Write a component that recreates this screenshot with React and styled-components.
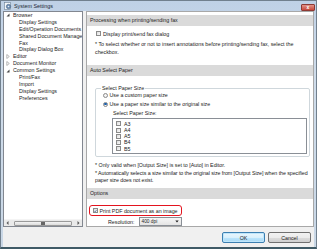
import React from 'react';
import styled, { createGlobalStyle } from 'styled-components';

const GlobalStyle = createGlobalStyle`
  html, body { margin: 0; padding: 0; }
  body {
    font-family: "Liberation Sans", Arial, sans-serif;
    font-size: 5.3px;
    color: #222;
    background: #fff;
  }
  * { box-sizing: border-box; }
`;

const Window = styled.div`
  width: 317px;
  height: 249px;
  display: flex;
  flex-direction: column;
  background: linear-gradient(#bfd1e6, #cfdcea 30%, #c9d7e6);
  border: 1px solid #71808e;
  border-bottom: 2px solid #3f5a66;
  padding: 0 2px 0 2px;
`;

const TitleBar = styled.div`
  height: 10px;
  display: flex;
  align-items: center;
  padding-left: 1px;
  gap: 2px;
  font-size: 5.4px;
  color: #1b2633;
`;

const CloseButton = styled.div`
  margin-left: auto;
  margin-right: -1px;
  width: 14px;
  height: 7px;
  margin-top: 2px;
  border-radius: 1px;
  border: 1px solid #8e3a34;
  background: linear-gradient(#e2958a, #c8473a);
  color: #fff;
  font-size: 5px;
  line-height: 5px;
  text-align: center;
  font-weight: bold;
`;

const Client = styled.div`
  flex: 1;
  display: flex;
  flex-direction: column;
  background: #f0f0f0;
`;

const Main = styled.div`
  height: 216px;
  display: flex;
  gap: 3px;
`;

const TreePane = styled.div`
  width: 80px;
  border: 1px solid #828790;
  background: #fff;
  display: flex;
  flex-direction: column;
`;

const TreeList = styled.div`
  flex: 1;
  overflow: hidden;
`;

const TreeItem = styled.div`
  height: 6.9px;
  line-height: 6.9px;
  white-space: nowrap;
  display: flex;
  align-items: center;
  padding-left: ${p => (p.$child ? 15 : 1)}px;
`;

const Arrow = styled.span`
  width: 6px;
  display: inline-flex;
  justify-content: center;
  align-items: center;
`;

const HScroll = styled.div`
  height: 7px;
  display: flex;
  align-items: center;
  background: #eaeaea;
  border-top: 1px solid #f4f4f4;
  padding: 0 1px;
  gap: 2px;
`;

const ScrollArrow = styled.span`
  width: 5px;
  display: flex;
  justify-content: center;
`;

const Thumb = styled.div`
  width: 58px;
  height: 5px;
  border: 1px solid #9a9a9a;
  border-radius: 1px;
  background: linear-gradient(#f4f4f4, #dadada);
  display: flex;
  justify-content: center;
  align-items: center;
  gap: 0.6px;
  margin-left: 2px;
  margin-right: auto;
`;

const Grip = styled.span`
  width: 0.6px;
  height: 3px;
  background: #666;
`;

const Panel = styled.div`
  flex: 1;
  border: 1px solid #a8a8a8;
  background: #fff;
  display: flex;
  flex-direction: column;
  padding-top: 3px;
`;

const SectionHeader = styled.div`
  height: 11px;
  line-height: 11px;
  background: #dadada;
  padding-left: 3px;
  margin-top: ${p => p.$mt || 0}px;
`;

const CheckRow = styled.div`
  height: 8px;
  display: flex;
  align-items: center;
  gap: 2px;
  padding-left: ${p => p.$pl || 0}px;
  margin-top: ${p => p.$mt || 0}px;
`;

const Box = styled.span`
  width: 5px;
  height: 5px;
  border: 0.7px solid #8a8a8a;
  background: linear-gradient(135deg, #dcdcdc, #fafafa);
  display: inline-flex;
  align-items: center;
  justify-content: center;
  flex: none;
`;

const Note = styled.div`
  padding-left: 8px;
  padding-right: ${p => (p.$pr !== undefined ? p.$pr : 3)}px;
  letter-spacing: ${p => p.$ls || 0}px;
  line-height: ${p => p.$lh || 7}px;
  margin-top: ${p => p.$mt || 0}px;
`;

const Group = styled.fieldset`
  margin: 10px 3px 0 8px;
  padding: 0 2px 2px 7px;
  border: 0.8px solid #cfd7dc;
  border-radius: 2px;
  min-width: 0;
`;

const Legend = styled.legend`
  padding: 0 1px;
  margin-left: -2px;
  line-height: 5px;
`;

const RadioRow = styled.div`
  height: 9px;
  display: flex;
  align-items: center;
  gap: 1.5px;
`;

const Radio = styled.span`
  width: 5px;
  height: 5px;
  border-radius: 50%;
  border: 0.7px solid #8a8a8a;
  background: #f4f4f4;
  display: inline-flex;
  align-items: center;
  justify-content: center;
  &::after {
    content: '';
    width: 2.4px;
    height: 2.4px;
    border-radius: 50%;
    background: ${p => (p.$on ? '#1d5fa8' : 'transparent')};
  }
`;

const ListLabel = styled.div`
  height: 9px;
  line-height: 9px;
  padding-left: 10px;
`;

const ListBox = styled.div`
  margin-left: 9px;
  height: 36px;
  border: 0.8px solid #8a8f96;
  background: #fff;
  padding: 2px 0 0 3px;
`;

const ListItem = styled.div`
  height: 6.2px;
  display: flex;
  align-items: center;
  gap: 3px;
`;

const Highlight = styled.div`
  margin: 6px 0 0 2px;
  width: 93px;
  height: 11px;
  border: 1.5px solid #e3141f;
  border-radius: 3px;
  display: flex;
  align-items: center;
  gap: 2px;
  padding-left: 2.5px;
  white-space: nowrap;
`;

const ResRow = styled.div`
  margin-top: 1px;
  display: flex;
  align-items: center;
  gap: 4px;
  padding-left: 21px;
`;

const Select = styled.div`
  width: 43px;
  height: 9px;
  border: 0.8px solid #8a8f96;
  background: linear-gradient(#f6f6f6, #e4e4e4);
  display: flex;
  align-items: center;
  padding: 0 2px;
  justify-content: space-between;
  font-size: 4.8px;
`;

const Footer = styled.div`
  flex: 1;
  display: flex;
  justify-content: flex-end;
  align-items: flex-start;
  gap: 3px;
  padding: 5px 3px 0 0;
`;

const Button = styled.div`
  width: 43px;
  height: 11px;
  border-radius: 2px;
  border: 1px solid ${p => (p.$primary ? '#3c7fb1' : '#707070')};
  background: ${p =>
    p.$primary
      ? 'linear-gradient(#eaf6fd, #d9f0fc 50%, #bee6fd 50%, #a7d9f5)'
      : 'linear-gradient(#f2f2f2, #ebebeb 50%, #dddddd 50%, #cfcfcf)'};
  box-shadow: ${p => (p.$primary ? 'inset 0 0 0 1px #bfe6fb' : 'none')};
  display: flex;
  align-items: center;
  justify-content: center;
`;

const TitleIcon = () => (
  <svg width="8" height="8" viewBox="0 0 8 8">
    <rect x="0.5" y="0.5" width="6" height="7" fill="#f3f6f9" stroke="#6b7f93" strokeWidth="0.6" />
    <circle cx="4.5" cy="4.5" r="2.2" fill="#6e8fb4" stroke="#3c5a7c" strokeWidth="0.5" />
    <circle cx="4.5" cy="4.5" r="0.8" fill="#e9eef4" />
  </svg>
);

const Expanded = () => (
  <svg width="4" height="4" viewBox="0 0 4 4">
    <path d="M3.5 0.5 L3.5 3.5 L0.5 3.5 Z" fill="#444" />
  </svg>
);

const Collapsed = () => (
  <svg width="4" height="5" viewBox="0 0 4 5">
    <path d="M0.8 0.5 L3.3 2.5 L0.8 4.5 Z" fill="none" stroke="#888" strokeWidth="0.6" />
  </svg>
);

const Check = () => (
  <svg width="4" height="4" viewBox="0 0 4 4">
    <path d="M0.5 2 L1.6 3.2 L3.5 0.6" fill="none" stroke="#2a4f8a" strokeWidth="0.8" />
  </svg>
);

const tree = [
  { label: 'Browser', icon: 'open' },
  { label: 'Display Settings', child: true },
  { label: 'Edit/Operation Documents', child: true },
  { label: 'Shared Document Manager', child: true },
  { label: 'Fax', child: true },
  { label: 'Display Dialog Box', child: true },
  { label: 'Editor', icon: 'closed' },
  { label: 'Document Monitor', icon: 'closed' },
  { label: 'Common Settings', icon: 'open' },
  { label: 'Print/Fax', child: true },
  { label: 'Import', child: true },
  { label: 'Display Settings', child: true },
  { label: 'Preferences', child: true },
];

const sizes = ['A3', 'A4', 'A5', 'B4', 'B5'];

export default function App() {
  return (
    <>
      <GlobalStyle />
      <Window>
        <TitleBar>
          <TitleIcon />
          <span>System Settings</span>
          <CloseButton>x</CloseButton>
        </TitleBar>
        <Client>
          <Main>
            <TreePane>
              <TreeList>
                {tree.map((t, i) => (
                  <TreeItem key={i} $child={t.child}>
                    {!t.child && (
                      <Arrow>{t.icon === 'open' ? <Expanded /> : <Collapsed />}</Arrow>
                    )}
                    <span style={{ marginLeft: t.child ? 0 : 2 }}>{t.label}</span>
                  </TreeItem>
                ))}
              </TreeList>
              <HScroll>
                <ScrollArrow>
                  <svg width="3" height="4" viewBox="0 0 3 4"><path d="M2.5 0 L0.5 2 L2.5 4 Z" fill="#555" /></svg>
                </ScrollArrow>
                <Thumb>
                  <Grip /><Grip /><Grip /><Grip />
                </Thumb>
                <ScrollArrow>
                  <svg width="3" height="4" viewBox="0 0 3 4"><path d="M0.5 0 L2.5 2 L0.5 4 Z" fill="#555" /></svg>
                </ScrollArrow>
              </HScroll>
            </TreePane>
            <Panel>
              <SectionHeader>Processing when printing/sending fax</SectionHeader>
              <CheckRow $pl={9} $mt={4}>
                <Box />
                <span>Display print/send fax dialog</span>
              </CheckRow>
              <Note $lh={8} $mt={2}>
                * To select whether or not to insert annotations before printing/sending fax, select the checkbox.
              </Note>
              <SectionHeader $mt={9}>Auto Select Paper</SectionHeader>
              <Group>
                <Legend>Select Paper Size</Legend>
                <RadioRow>
                  <Radio />
                  <span>Use a custom paper size</span>
                </RadioRow>
                <RadioRow>
                  <Radio $on />
                  <span>Use a paper size similar to the original size</span>
                </RadioRow>
                <ListLabel>Select Paper Size:</ListLabel>
                <ListBox>
                  {sizes.map(s => (
                    <ListItem key={s}>
                      <Box />
                      <span>{s}</span>
                    </ListItem>
                  ))}
                </ListBox>
              </Group>
              <Note $mt={5}>* Only valid when [Output Size] is set to [Auto] in Editor.</Note>
              <Note $mt={1.5} $pr={0} $ls={-0.06}>
                * Automatically selects a size similar to the original size from [Output Size] when the specified paper size does not exist.
              </Note>
              <SectionHeader $mt={4}>Options</SectionHeader>
              <Highlight>
                <Box><Check /></Box>
                <span>Print PDF document as an image</span>
              </Highlight>
              <ResRow>
                <span>Resolution:</span>
                <Select>
                  <span>400 dpi</span>
                  <svg width="4" height="3" viewBox="0 0 4 3"><path d="M0.3 0.5 L3.7 0.5 L2 2.6 Z" fill="#222" /></svg>
                </Select>
              </ResRow>
            </Panel>
          </Main>
          <Footer>
            <Button $primary>OK</Button>
            <Button>Cancel</Button>
          </Footer>
        </Client>
      </Window>
    </>
  );
}
